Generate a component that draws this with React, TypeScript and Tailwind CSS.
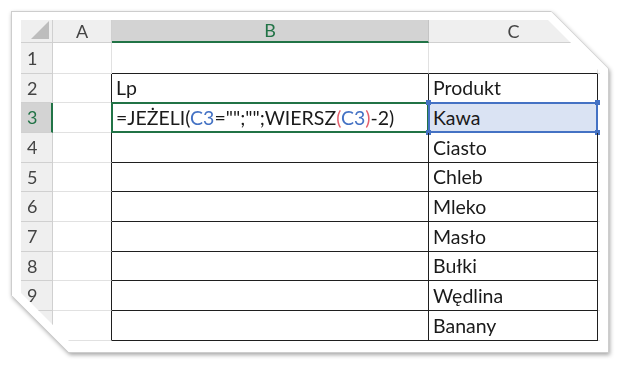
import React from "react";

const products = ["", "Produkt", "Kawa", "Ciasto", "Chleb", "Mleko", "Masło", "Bułki", "Wędlina", "Banany"];
const rowHeights = ["h-[31px]", "h-[29px]", "h-[30px]", "h-[30px]", "h-[29px]", "h-[30px]", "h-[30px]", "h-[29px]", "h-[30px]", "h-[30px]"];

function Formula() {
  return (
    <span className="whitespace-nowrap">
      =JEŻELI(<span className="text-[#4472c4]">C3</span>="";"";WIERSZ
      <span className="text-[#e4606d]">(</span>
      <span className="text-[#4472c4]">C3</span>
      <span className="text-[#e4606d]">)</span>-2)
    </span>
  );
}

function Handle({ pos }: { pos: string }) {
  return <div className={`absolute w-[5px] h-[5px] bg-[#4472c4] ${pos}`} />;
}

export default function App() {
  return (
    <div className="w-[621px] h-[366px] bg-white pt-[11px] pl-[11px] font-['Lato','Open_Sans',sans-serif] text-[#1a1a1a]">
      <div className="w-[598px] h-[342px] [filter:drop-shadow(1px_2px_2px_rgba(0,0,0,0.35))]">
        <div className="w-full h-full bg-[#cdcdcd] p-px [clip-path:polygon(0_0,540px_0,598px_58px,598px_342px,58px_342px,0_284px)]">
          <div className="w-full h-full bg-white pl-[9px] pt-[8px] [clip-path:polygon(0_0,539.5px_0,596px_56.5px,596px_340px,56.5px_340px,0_283.5px)]">
            <div className="w-[579px] h-[324px] overflow-hidden [clip-path:polygon(0_0,527px_0,579px_52px,579px_324px,51px_324px,0_273px)]">
              <div className="grid grid-cols-[32px_59px_317px_169px_2px]">
                {/* header row */}
                <div className="h-[23px] bg-[#efefef] border-r border-b border-[#d0d0d0] relative">
                  <svg className="absolute right-[3px] bottom-[3px]" width="18" height="18" viewBox="0 0 18 18">
                    <polygon points="18,0 18,18 0,18" fill="#bdbdbd" />
                  </svg>
                </div>
                <div className="h-[23px] bg-[#efefef] border-r border-b border-[#d0d0d0] flex items-center justify-center text-[18px] text-[#444]">A</div>
                <div className="h-[23px] bg-[#d3d3d3] border-r border-[#c4c4c4] border-b-2 border-b-[#217346] flex items-center justify-center text-[18px] text-[#217346]">B</div>
                <div className="h-[23px] bg-[#efefef] border-b border-[#d0d0d0] flex items-center justify-center text-[18px] text-[#444]">C</div>
                <div className="h-[23px] bg-[#efefef] border-b border-[#d0d0d0]" />

                {rowHeights.map((h, i) => {
                  const r = i + 1;
                  const inTable = r >= 2;
                  const isActive = r === 3;
                  return (
                    <React.Fragment key={r}>
                      <div
                        className={`${h} border-b border-[#d0d0d0] flex items-center pl-[6px] text-[18px] ${
                          isActive
                            ? "bg-[#d3d3d3] text-[#217346] border-r-2 border-r-[#217346]"
                            : "bg-[#efefef] text-[#444] border-r border-r-[#d0d0d0]"
                        }`}
                      >
                        {r}
                      </div>
                      <div className={`${h} border-b border-[#e1e1e1] border-r ${inTable ? "border-r-[#1f1f1f]" : "border-r-[#e1e1e1]"}`} />
                      <div
                        className={`${h} relative border-b border-b-[#1f1f1f] border-r ${
                          inTable ? "border-r-[#1f1f1f]" : "border-r-[#e1e1e1]"
                        } flex items-end pl-[4px] pb-[3px] text-[19.5px] leading-[22px]`}
                      >
                        {r === 2 && <span>Lp</span>}
                        {isActive && <Formula />}
                        {isActive && (
                          <div className="absolute -top-px -left-px -right-px -bottom-px border-2 border-[#217346]" />
                        )}
                      </div>
                      <div
                        className={`${h} relative border-b border-b-[#1f1f1f] border-r ${
                          inTable ? "border-r-[#1f1f1f]" : "border-r-[#e1e1e1]"
                        } flex items-end pl-[4px] pb-[3px] text-[19.5px] leading-[22px] ${isActive ? "bg-[#dae3f3]" : ""}`}
                      >
                        <span>{products[i]}</span>
                        {isActive && (
                          <>
                            <div className="absolute -top-px -left-px -right-px -bottom-px border-2 border-[#4472c4]" />
                            <Handle pos="-top-[3px] -left-[3px]" />
                            <Handle pos="-top-[3px] -right-[3px]" />
                            <Handle pos="-bottom-[3px] -left-[3px]" />
                            <Handle pos="-bottom-[3px] -right-[3px]" />
                          </>
                        )}
                      </div>
                      <div className={`${h} border-b border-[#e1e1e1]`} />
                    </React.Fragment>
                  );
                })}
              </div>
            </div>
          </div>
        </div>
      </div>
    </div>
  );
}
